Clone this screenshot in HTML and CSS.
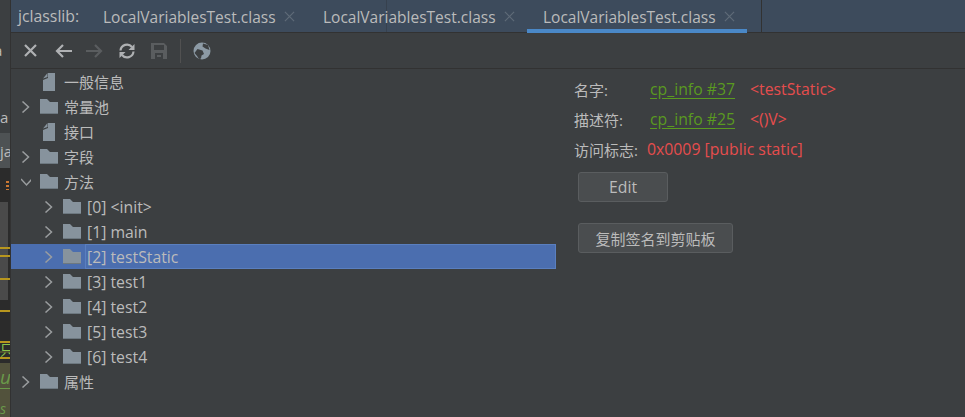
FILE: index.html
```html
<!DOCTYPE html>
<html lang="en">
<head>
  <meta charset="UTF-8">
  <meta name="viewport" content="width=device-width, initial-scale=1.0">
  <title>jclasslib</title>
  <link rel="stylesheet" href="styles.css">
</head>
<body>

  <!-- icons used by the tree -->
  <svg class="icon-defs">
    <symbol id="chevron" viewBox="0 0 10 12"><path d="M1.500 0.500l6 5.500-6 5.500"/></symbol>
    <symbol id="chevron-down" viewBox="0 0 10 12"><path d="M0 3l5.500 6 5.500-6"/></symbol>
    <symbol id="folder" viewBox="0 0 18 15"><path d="M0 15V0h7l3 3h8v12z"/><path class="folder-edge" d="M0 14h18v1H0z"/></symbol>
    <symbol id="file" viewBox="0 0 12 18"><path d="M0 18V7l5-2V0l2 0h5v18z"/><path d="M0 5.500L4.500 0v4L0 5.500z"/></symbol>
  </svg>

  <!-- slice of the editor behind the tool window -->
  <div class="editor-strip">
    <div class="strip-top">
      <div class="strip-cut">a</div>
      <div class="strip-file">a</div>
    </div>
    <div class="strip-tab">ja</div>
    <div class="strip-dark">
      <span class="strip-dots"></span>
    </div>
    <div class="strip-gray">
      <span class="strip-line line-a"></span>
      <span class="strip-line line-b"></span>
      <span class="strip-line line-c"></span>
    </div>
    <div class="strip-code">
      <span class="strip-line line-d"></span>
      <span class="strip-word">只</span>
    </div>
    <div class="strip-olive">
      <span class="strip-ut">ut</span>
      <span class="strip-s">s</span>
    </div>
  </div>

  <div class="tool-window">
    <div class="tab-bar">
      <span class="tab-title">jclasslib:</span>
      <div class="tab">LocalVariablesTest.class<svg class="tab-close" viewBox="0 0 12 12"><path d="M1 1l10 10M11 1L1 11"/></svg></div>
      <div class="tab">LocalVariablesTest.class<svg class="tab-close" viewBox="0 0 12 12"><path d="M1 1l10 10M11 1L1 11"/></svg></div>
      <div class="tab tab-active">LocalVariablesTest.class<svg class="tab-close" viewBox="0 0 12 12"><path d="M1 1l10 10M11 1L1 11"/></svg></div>
      <span class="tab-divider"></span>
    </div>

    <div class="toolbar">
      <svg class="tool-icon" viewBox="0 0 16 16"><path class="stroke-light" d="M2 2l11 11M13 2L2 13"/></svg>
      <svg class="tool-icon arrow-icon" viewBox="0 0 18 16"><path class="stroke-light" d="M18 8H3M9 2L3 8l6 6"/></svg>
      <svg class="tool-icon arrow-icon" viewBox="0 0 18 16"><path class="stroke-dim" d="M0 8h15M9 2l6 6-6 6"/></svg>
      <svg class="tool-icon" viewBox="0 0 16 16"><path class="stroke-light" d="M1.500 7.500a6.500 6.500 0 0 1 11.500-3.500M14.500 8.500a6.500 6.500 0 0 1-11.500 3.500"/><path class="fill-light" d="M9.500 7h6V1zM6.500 9h-6v6z"/></svg>
      <svg class="tool-icon" viewBox="0 0 16 16"><path class="fill-dim" fill-rule="evenodd" d="M0 0h13l3 3v13H0zM3 2v5h10V2zM4 10v6h8v-6z"/><path class="fill-dim" d="M6 12h4v2H6z"/></svg>
      <span class="tool-sep"></span>
      <svg class="tool-icon globe-icon" viewBox="0 0 18 18"><circle class="globe" cx="9" cy="9" r="8.500"/><path class="globe-land" d="M1.500 11l3-4 5 1.500 1.500 3.500-2.500 1.500-.5 3-2 .5-2-3zM10 1.500l5 1.500 1.500 5-4-1.500-3-2z"/></svg>
    </div>

    <div class="content">
      <div class="tree">
        <div class="row">
          <span class="arrow"></span>
          <svg class="file-icon"><use href="#file"/></svg>
          <span class="label cjk">一般信息</span>
        </div>
        <div class="row">
          <svg class="arrow"><use href="#chevron"/></svg>
          <svg class="folder-icon"><use href="#folder"/></svg>
          <span class="label cjk">常量池</span>
        </div>
        <div class="row">
          <span class="arrow"></span>
          <svg class="file-icon"><use href="#file"/></svg>
          <span class="label cjk">接口</span>
        </div>
        <div class="row">
          <svg class="arrow"><use href="#chevron"/></svg>
          <svg class="folder-icon"><use href="#folder"/></svg>
          <span class="label cjk">字段</span>
        </div>
        <div class="row">
          <svg class="arrow"><use href="#chevron-down"/></svg>
          <svg class="folder-icon"><use href="#folder"/></svg>
          <span class="label cjk">方法</span>
        </div>
        <div class="row child">
          <svg class="arrow"><use href="#chevron"/></svg>
          <svg class="folder-icon"><use href="#folder"/></svg>
          <span class="label">[0] &lt;init&gt;</span>
        </div>
        <div class="row child">
          <svg class="arrow"><use href="#chevron"/></svg>
          <svg class="folder-icon"><use href="#folder"/></svg>
          <span class="label">[1] main</span>
        </div>
        <div class="row child selected">
          <svg class="arrow"><use href="#chevron"/></svg>
          <svg class="folder-icon"><use href="#folder"/></svg>
          <span class="label">[2] testStatic</span>
        </div>
        <div class="row child">
          <svg class="arrow"><use href="#chevron"/></svg>
          <svg class="folder-icon"><use href="#folder"/></svg>
          <span class="label">[3] test1</span>
        </div>
        <div class="row child">
          <svg class="arrow"><use href="#chevron"/></svg>
          <svg class="folder-icon"><use href="#folder"/></svg>
          <span class="label">[4] test2</span>
        </div>
        <div class="row child">
          <svg class="arrow"><use href="#chevron"/></svg>
          <svg class="folder-icon"><use href="#folder"/></svg>
          <span class="label">[5] test3</span>
        </div>
        <div class="row child">
          <svg class="arrow"><use href="#chevron"/></svg>
          <svg class="folder-icon"><use href="#folder"/></svg>
          <span class="label">[6] test4</span>
        </div>
        <div class="row">
          <svg class="arrow"><use href="#chevron"/></svg>
          <svg class="folder-icon"><use href="#folder"/></svg>
          <span class="label cjk">属性</span>
        </div>
      </div>

      <div class="details">
        <div class="info-row">
          <span class="info-name cjk">名字:</span>
          <a class="info-link">cp_info #37</a>
          <span class="info-value">&lt;testStatic&gt;</span>
        </div>
        <div class="info-row">
          <span class="info-name cjk">描述符:</span>
          <a class="info-link">cp_info #25</a>
          <span class="info-value">&lt;()V&gt;</span>
        </div>
        <div class="info-row">
          <span class="info-flags cjk">访问标志:</span>
          <span class="info-red">0x0009 [public static]</span>
        </div>
        <button class="btn btn-edit">Edit</button>
        <button class="btn btn-copy cjk">复制签名到剪贴板</button>
      </div>
    </div>
  </div>

</body>
</html>
```

FILE: styles.css
```css
html, body {
  height: 100%;
}

body {
  font-family: 'Open Sans', 'Noto Sans CJK SC', sans-serif;
  font-size: 15.800px;
  margin: 0;
  padding: 0;
  background-color: #3c3f41;
  color: #bbbbbb;
  display: flex;
  overflow: hidden;
}

.icon-defs {
  display: none;
}

.cjk {
  font-size: 15px;
}

/* editor slice on the left */
.editor-strip {
  width: 10px;
  flex-shrink: 0;
  display: flex;
  flex-direction: column;
  overflow: hidden;
  border-right: 1px solid #323232;
  font-size: 15px;
  line-height: 16px;
}

.strip-top {
  height: 133px;
  padding-top: 42px;
  box-sizing: border-box;
}

.strip-cut {
  margin-left: -6px;
}

.strip-file {
  margin-top: 51px;
}

.strip-tab {
  height: 35px;
  line-height: 36px;
  background-color: #4e5254;
}

.strip-dark {
  height: 34px;
  background-color: #2b2b2b;
  display: flex;
  justify-content: flex-end;
  padding-top: 13px;
  box-sizing: border-box;
}

.strip-dots {
  width: 3px;
  height: 9px;
  margin-right: 1px;
  background: repeating-linear-gradient(#cc7832 0 2px, transparent 2px 4px);
}

.strip-gray {
  height: 98px;
  background: linear-gradient(to right, #4a4a4a 8px, #2b2b2b 8px);
  display: flex;
  flex-direction: column;
}

.strip-line {
  display: block;
  height: 2px;
  flex-shrink: 0;
  background-color: #b8961e;
}

.line-a { margin-top: 45px; }
.line-b { margin-top: 6px; }
.line-c { margin-top: 21px; }

.strip-code {
  height: 63px;
  background-color: #2b2b2b;
  display: flex;
  flex-direction: column;
}

.line-d { margin-top: 10px; }

.strip-word {
  height: 18px;
  margin-top: 29px;
  color: #8bc34a;
  font-size: 14px;
  line-height: 14px;
  background: linear-gradient(#4f4f2f, #4f4f2f) 0 8px / 100% 2px no-repeat;
  border-top: 2px solid #b8961e;
  border-bottom: 2px solid #b8961e;
  box-sizing: border-box;
  overflow: hidden;
}

.strip-olive {
  flex: 1;
  background-color: #52523c;
  color: #6a9a4a;
  font-style: italic;
  font-size: 19px;
}

.strip-ut {
  display: block;
  height: 26px;
  padding-top: 4px;
  line-height: 20px;
  box-sizing: border-box;
  border-bottom: 1px solid #6a9a4a;
}

.strip-s {
  display: block;
  padding-top: 12px;
  font-size: 14px;
}

/* tool window */
.tool-window {
  flex: 1;
  display: flex;
  flex-direction: column;
  min-width: 0;
}

.tab-bar {
  height: 33px;
  box-sizing: border-box;
  background: linear-gradient(#37414e, #37414e) 375px 0 / 1px 100% no-repeat #3d4b5c;
  border-bottom: 1px solid #323232;
  display: flex;
  align-items: stretch;
  padding-left: 7px;
}

.tab-title {
  line-height: 33px;
  width: 69px;
  flex-shrink: 0;
}

.tab {
  display: flex;
  align-items: center;
  width: 220px;
  padding-left: 16px;
  box-sizing: border-box;
  height: 33px;
  flex-shrink: 0;
  font-size: 15.500px;
  white-space: nowrap;
}

.tab-active {
  box-shadow: inset 0 -4px 0 #4a88c7;
}

.tab-close {
  width: 11px;
  height: 11px;
  margin-left: 8px;
  flex-shrink: 0;
  fill: none;
  stroke: #5f6b78;
  stroke-width: 1.3;
}

.tab-divider {
  width: 1px;
  height: 32px;
  background-color: #323232;
  margin-left: 14px;
}

.toolbar {
  height: 36px;
  box-sizing: border-box;
  border-bottom: 1px solid #323232;
  display: flex;
  align-items: center;
  padding-left: 12px;
  gap: 16px;
}

.tool-icon {
  width: 16px;
  height: 16px;
  flex-shrink: 0;
}

.arrow-icon {
  width: 18px;
  margin: 0 -1px;
}

.globe-icon {
  width: 18px;
  height: 18px;
  margin-left: -4px;
}

.stroke-light {
  fill: none;
  stroke: #afb1b3;
  stroke-width: 2.200;
}

.stroke-dim {
  fill: none;
  stroke: #5a5d5f;
  stroke-width: 2.200;
}

.fill-light {
  fill: #afb1b3;
}

.fill-dim {
  fill: #5a5d5f;
}

.globe {
  fill: #8c9aa5;
}

.globe-land {
  fill: #3c3f41;
}

.tool-sep {
  width: 1px;
  height: 24px;
  background-color: #515151;
  margin-left: -3px;
}

.content {
  flex: 1;
  display: flex;
  min-height: 0;
}

.tree {
  width: 545px;
  flex-shrink: 0;
  display: flex;
  flex-direction: column;
}

.row {
  height: 25px;
  flex-shrink: 0;
  display: flex;
  align-items: center;
  padding-left: 10px;
  box-sizing: border-box;
}

.child {
  padding-left: 33px;
}

.selected {
  background-color: #4b6eaf;
}

.selected .label {
  flex: 1;
  align-self: stretch;
  line-height: 24px;
  margin-left: -2px;
  padding-left: 1px;
  border: 1px solid #5a7fbf;
}

.arrow {
  width: 10px;
  height: 12px;
  flex-shrink: 0;
  fill: none;
  stroke: #9a9d9f;
  stroke-width: 1.500;
}

.file-icon {
  width: 12px;
  height: 18px;
  margin-left: 12px;
  margin-right: 9px;
  flex-shrink: 0;
  fill: #87939d;
}

.folder-icon {
  width: 18px;
  height: 15px;
  margin-left: 9px;
  margin-right: 6px;
  flex-shrink: 0;
  fill: #87939d;
}

.folder-edge {
  fill: #6d7880;
}

.label {
  white-space: nowrap;
  line-height: 18px;
}

.details {
  flex: 1;
  display: flex;
  flex-direction: column;
  align-items: flex-start;
  padding: 5px 0 0 18px;
}

.info-row {
  height: 30px;
  display: flex;
  align-items: center;
  flex-shrink: 0;
  white-space: nowrap;
}

.info-name {
  width: 76px;
}

.info-flags {
  width: 73px;
}

.info-link {
  color: #5a9a20;
  text-decoration: underline;
  text-underline-offset: 3px;
  width: 100px;
}

.info-value, .info-red {
  color: #e64d4d;
}

.btn {
  font-family: inherit;
  color: #bbbbbb;
  height: 30px;
  background-color: #4a4d4f;
  border: 1px solid #5a5d5f;
  border-radius: 3px;
  margin-left: 4px;
  padding: 0;
  flex-shrink: 0;
}

.btn-edit {
  font-size: 15.800px;
  width: 90px;
  margin-top: 8px;
}

.btn-copy {
  width: 155px;
  margin-top: 21px;
}
```
